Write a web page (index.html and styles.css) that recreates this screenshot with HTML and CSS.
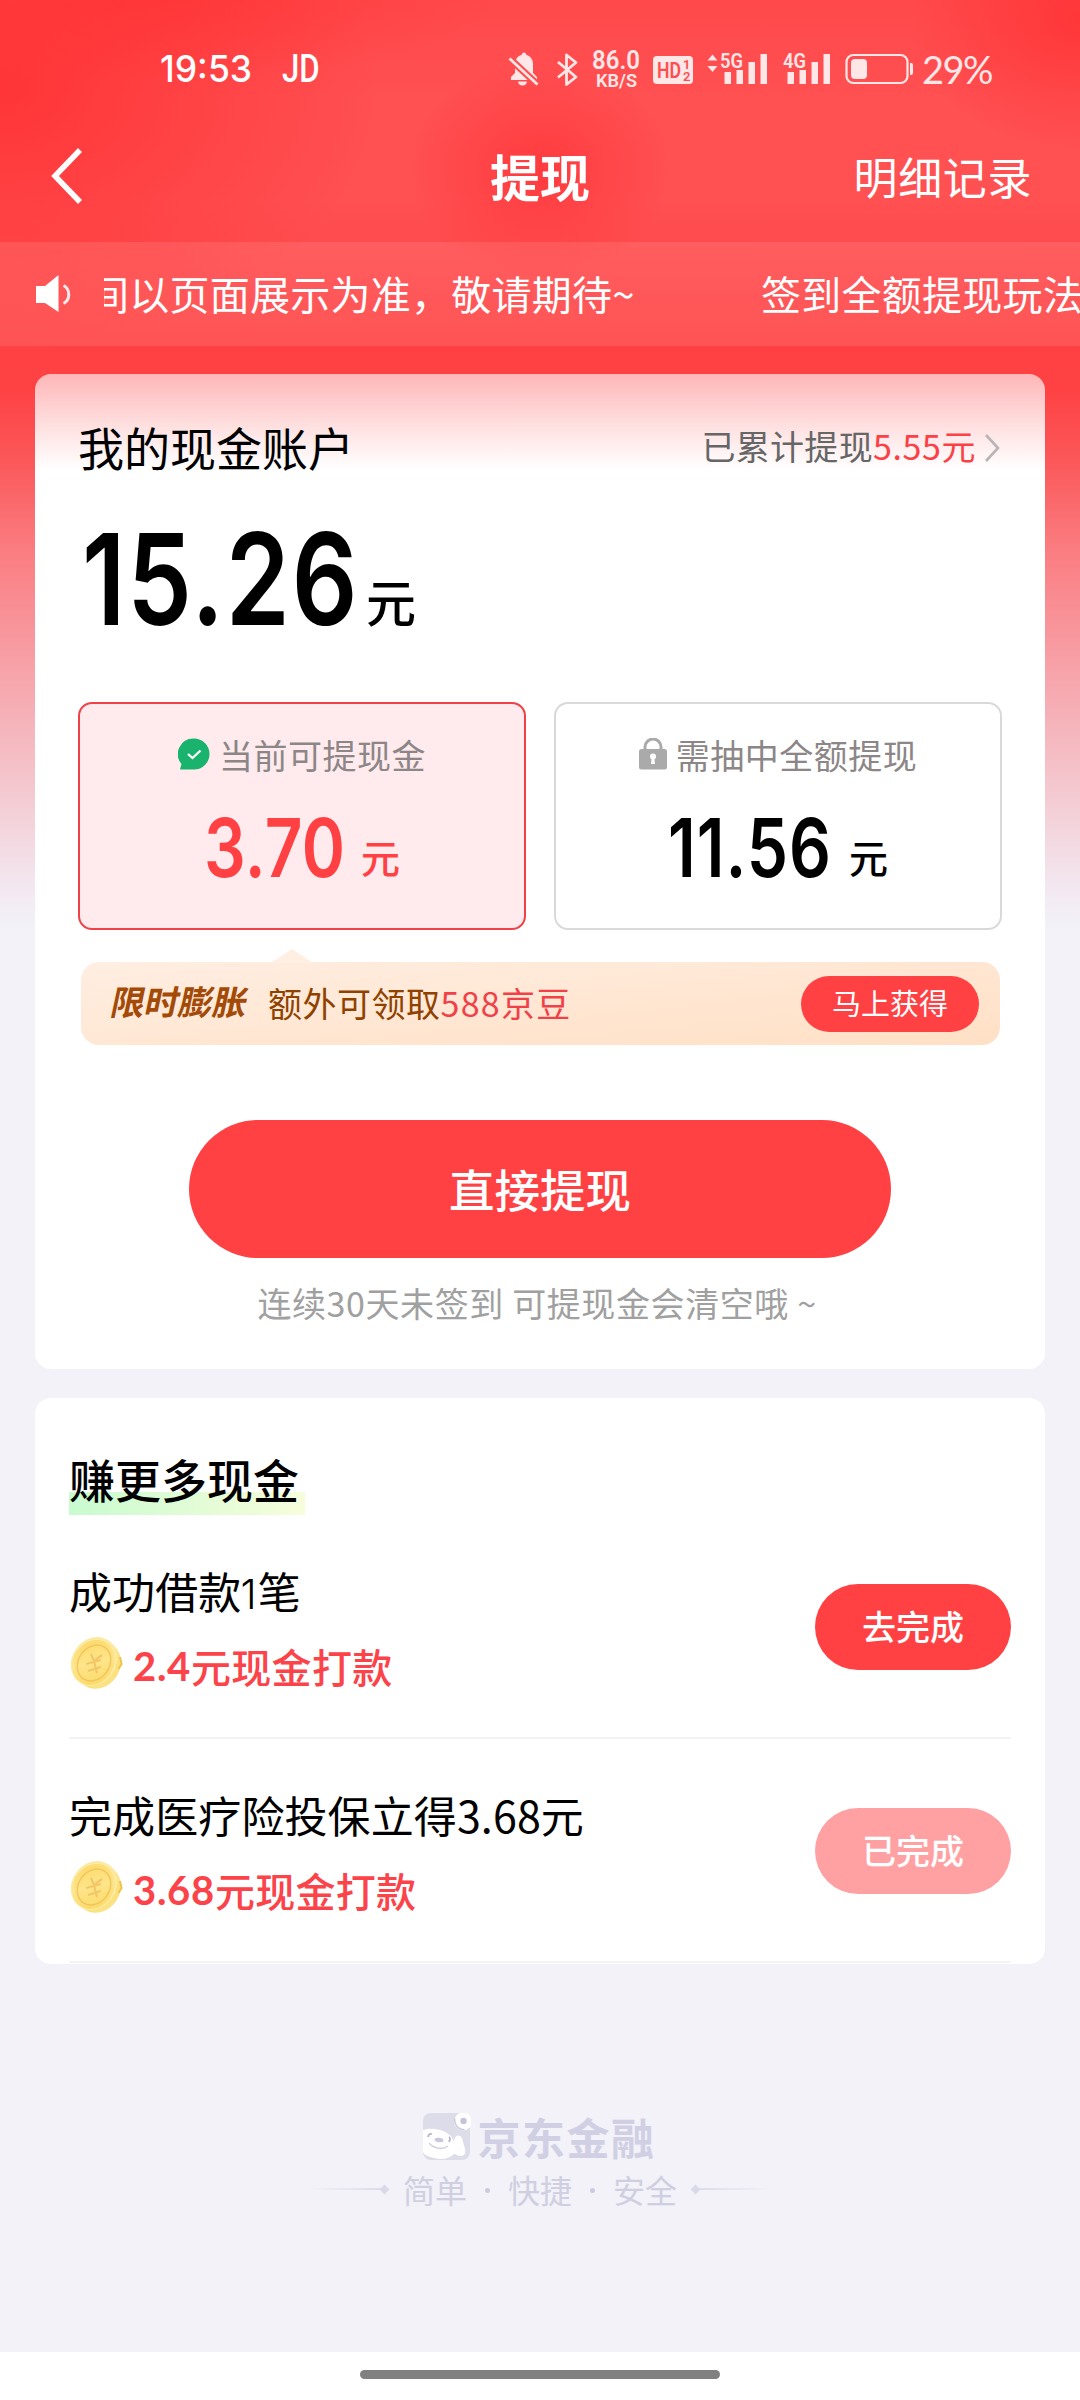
FILE: index.html
```html
<!DOCTYPE html>
<html lang="zh-CN">
<head>
<meta charset="utf-8">
<title>提现</title>
<link rel="stylesheet" href="styles.css">
</head>
<body>
<div class="page">
  <div class="status">
    <span class="clock">19:53</span><span class="carrier">JD</span>
    <svg class="indicators" width="410" height="44" viewBox="500 48 410 44" fill="#ffe6e7">
      <path d="M511 80v-3l4-4v-9c0-5 3-8 7-9.500a2 2 0 0 1 4 0c4 1.500 7 4.500 7 9.500v9l4 4v3z"/>
      <path d="M518 81.500h9a4.500 4 0 0 1-9 0z"/>
      <path d="M508 57l30 28" stroke="#ff4e50" stroke-width="7"/>
      <path d="M509.500 58.500l28 26" stroke="#ffe6e7" stroke-width="2.800"/>
      <path d="M558 62l18 15-9.500 7.500v-29.500l9.500 7.500-18 15" fill="none" stroke="#ffe6e7" stroke-width="2.800" stroke-linejoin="round"/>
      <text class="ind-b" x="592" y="69" textLength="48" lengthAdjust="spacingAndGlyphs" font-size="25">86.0</text>
      <text class="ind-b" x="596" y="87" textLength="41" lengthAdjust="spacingAndGlyphs" font-size="19">KB/S</text>
      <rect x="653" y="56" width="40" height="28" rx="4"/>
      <text class="ind-b" x="657" y="78" textLength="24" lengthAdjust="spacingAndGlyphs" font-size="22" fill="#ff4e50">HD</text>
      <text class="ind-b" x="683" y="69" font-size="13" fill="#ff4e50">1</text>
      <text class="ind-b" x="683" y="81" font-size="13" fill="#ff4e50">2</text>
      <path d="M707.500 60.500l5-6 5 6zM707.500 66l5 6 5-6z"/>
      <text class="ind-b" x="720" y="68" textLength="23" lengthAdjust="spacingAndGlyphs" font-size="21">5G</text>
      <path d="M724.500 72h6.500v12h-6.500zM736.500 70h6.500v14h-6.500zM748.500 62h6.500v22h-6.500zM760.500 54h6.500v30h-6.500z"/>
      <text class="ind-b" x="783" y="68" textLength="23" lengthAdjust="spacingAndGlyphs" font-size="21">4G</text>
      <path d="M787.500 72h6.500v12h-6.500zM799.500 70h6.500v14h-6.500zM811.500 62h6.500v22h-6.500zM823.500 54h6.500v30h-6.500z"/>
      <rect x="846.500" y="55" width="61" height="28" rx="7" fill="none" stroke="#ffe6e7" stroke-width="2.200"/>
      <rect x="851" y="59" width="16" height="20" rx="4"/>
    </svg>
    <i class="tip"></i><span class="battery">29%</span>
  </div>
  <div class="nav">
    <svg class="back" width="34" height="58" viewBox="0 0 34 58"><path d="M30 3L5 29l25 26" fill="none" stroke="#fff" stroke-width="5.500"/></svg>
    <h1>提现</h1>
    <span class="records">明细记录</span>
  </div>
  <div class="notice">
    <svg class="horn" width="38" height="38" viewBox="0 0 38 38" fill="#fff"><path d="M1 11h9L23.500 0v37L10 28H1z"/><path d="M28.500 10.500c7 3.500 7 14.500 0 18" fill="none" stroke="#ffe9ea" stroke-width="3"/></svg>
    <div class="marquee"><span class="first">间以页面展示为准，敬请期待~</span><span class="second">签到全额提现玩法</span></div>
  </div>

  <section class="card account">
    <div class="account-head">
      <h2>我的现金账户</h2>
      <span class="total">已累计提现<b>5.55元</b></span>
      <svg class="more" width="18" height="30" viewBox="0 0 18 30"><path d="M2 2l12 13L2 28" fill="none" stroke="#b9b4b5" stroke-width="2.600"/></svg>
    </div>
    <div class="balance"><span class="digits">15.26</span><span class="yuan">元</span></div>
    <div class="options">
      <div class="option active">
        <div class="option-name">
          <svg width="32" height="32" viewBox="0 0 32 32"><path d="M16 .5a15.500 15.500 0 0 1 0 31H3c-1 0-1-.5-.7-1.200L3.500 26A15.500 15.500 0 0 1 16 .5z" fill="#19b36d"/><path d="M10 16l4.500 4L22.500 12.500" fill="none" stroke="#fff" stroke-width="2.300"/></svg>
          <span>当前可提现金</span>
        </div>
        <div class="option-sum"><span class="digits d1">3.70</span><span class="yuan">元</span></div>
      </div>
      <div class="option">
        <div class="option-name">
          <svg width="28" height="32" viewBox="0 0 28 32"><path d="M6 13V9a8 8 0 0 1 16 0v4" fill="none" stroke="#aaa" stroke-width="3"/><rect y="11" width="28" height="20.500" rx="2.500" fill="#aaa"/><circle cx="14" cy="18.500" r="3" fill="#fff"/><path d="M12.800 19h2.400l.8 7h-4z" fill="#fff"/></svg>
          <span>需抽中全额提现</span>
        </div>
        <div class="option-sum"><span class="digits d2">11.56</span><span class="yuan">元</span></div>
      </div>
    </div>
    <div class="promo">
      <span class="promo-tag">限时膨胀</span>
      <span class="promo-text">额外可领取<b>588京豆</b></span>
      <span class="promo-btn">马上获得</span>
    </div>
    <div class="withdraw">直接提现</div>
    <p class="hint">连续30天未签到 可提现金会清空哦 ~</p>
  </section>

  <section class="card tasks">
    <h2><span>赚更多现金</span></h2>
    <div class="task">
      <div class="task-info">
        <div class="task-name">成功借款<span class="one">1</span>笔</div>
        <div class="reward">
          <svg width="54" height="54" viewBox="0 0 54 54"><use href="#coin"/></svg>
          <span class="sum"><span class="num">2.4</span>元现金打款</span>
        </div>
      </div>
      <span class="task-btn">去完成</span>
    </div>
    <div class="task">
      <div class="task-info">
        <div class="task-name">完成医疗险投保立得3.68元</div>
        <div class="reward">
          <svg width="54" height="54" viewBox="0 0 54 54"><use href="#coin"/></svg>
          <span class="sum"><span class="num">3.68</span>元现金打款</span>
        </div>
      </div>
      <span class="task-btn done">已完成</span>
    </div>
  </section>

  <footer>
    <div class="brand">
      <svg width="48" height="48" viewBox="0 0 48 48">
        <rect x="0" y="0" width="47" height="47" rx="8" fill="#dddce9"/>
        <path d="M0 17c8-3 21-1 28 6 2 3 2 5 3 5 1-6 5-7 8-3l3 11c1 5-1 7-4 7-4 0-5-2-7-2-5 5-12 6-20 4C3 43 0 41 0 38z" fill="#fff"/>
        <ellipse cx="16" cy="27" rx="4.500" ry="2.200" fill="#c9c7dc" transform="rotate(8 16 27)"/>
        <path d="M6 30c5 6 14 7 19 3" fill="none" stroke="#d3d2e2" stroke-width="1.600"/>
        <path d="M5 24q1-4 4-3M26 24q2 1 0 5" fill="none" stroke="#b7b5ce" stroke-width="1.800"/>
        <circle cx="40" cy="8.500" r="9" fill="#fff"/><path d="M31.500 5q0 11 10 12" fill="none" stroke="#cfcde0" stroke-width="1.500"/><circle cx="40.500" cy="8" r="3.200" fill="#c6c4da"/>
      </svg>
      <span>京东金融</span>
    </div>
    <div class="slogan"><i class="line left"></i><i class="dot"></i><span>简单</span><em></em><span>快捷</span><em></em><span>安全</span><i class="dot"></i><i class="line right"></i></div>
  </footer>
  <div class="gesture"><i></i></div>
</div>
<svg class="defs" width="0" height="0">
  <defs>
    <linearGradient id="face" x1="0" y1="0" x2="1" y2="1"><stop offset="0" stop-color="#fdd663"/><stop offset=".5" stop-color="#fee58a"/><stop offset="1" stop-color="#fbd65c"/></linearGradient>
    <linearGradient id="rim" x1="0" y1="0" x2="1" y2="1"><stop offset="0" stop-color="#fdedb0"/><stop offset=".6" stop-color="#fbe07a"/><stop offset="1" stop-color="#fbe48a"/></linearGradient>
    <g id="coin">
      <ellipse cx="29" cy="28.500" rx="22" ry="25" transform="rotate(30 29 28.500)" fill="url(#rim)"/>
      <path d="M51 21l1.500 7-3 5" fill="none" stroke="#f0c34c" stroke-width="2"/>
      <ellipse cx="25" cy="25.500" rx="22" ry="25.500" transform="rotate(35 25 25.500)" fill="#fdeaa2"/>
      <ellipse cx="24.500" cy="26.500" rx="20" ry="23.500" transform="rotate(35 24.500 26.500)" fill="url(#face)"/>
      <ellipse cx="25" cy="27" rx="15.500" ry="19" transform="rotate(35 25 27)" fill="none" stroke="#f1c65a" stroke-width="1.500"/>
      <path d="M22 18l3 7 8-6M17 28l15-4M19 35l13-4M25 25l3 12" stroke="#f2c768" stroke-width="2.200" fill="none"/>
    </g>
  </defs>
</svg>
</body>
</html>
```
FILE: styles.css
```css
* { box-sizing: border-box; }
body { margin: 0; font-family: "Noto Sans CJK SC", "Noto Sans", sans-serif; color: #000; }
h1, h2, p { margin: 0; font-weight: 400; }
b, i, em { font-weight: inherit; font-style: normal; }
svg { display: block; flex: none; }
.defs { position: absolute; }

.page {
  width: 1080px; height: 2400px; overflow: hidden;
  display: flex; flex-direction: column;
  white-space: nowrap;
  background:
    radial-gradient(ellipse 130px 110px at 540px 170px, rgba(255,52,56,.75), rgba(255,52,56,0)),
    radial-gradient(ellipse 380px 260px at 0 90px, rgba(255,46,48,.8), rgba(255,46,48,0)),
    radial-gradient(ellipse 170px 130px at 1080px 20px, rgba(255,46,48,.7), rgba(255,46,48,0)),
    radial-gradient(ellipse 340px 80px at 160px 0, rgba(255,46,48,.5), rgba(255,46,48,0)),
    linear-gradient(#ff494b 0, #ff5052 100px, #ff5052 200px, #ff4042 345px, #fe4244 390px, #fb5759 460px, #fa7b7f 545px, #f6acb3 700px, #f3e2ea 870px, #f3ebf5 900px, #f2f2f8 930px);
}

/* system status bar */
.status { height: 138px; display: flex; align-items: center; color: #fff; font-family: Lato, sans-serif; padding-left: 160px; }
.clock { font-family: Inter, sans-serif; font-size: 37px; width: 122px; line-height: 44px; font-weight: 500; transform: scaleX(.96); transform-origin: 0 50%; }
.carrier { font-family: Roboto, sans-serif; font-size: 38px; width: 218px; line-height: 44px; font-weight: 500; transform: scaleX(.82); transform-origin: 0 50%; }
.indicators { margin-top: 2px; }
.ind-b { font-family: Roboto, sans-serif; font-weight: 600; }
.tip { width: 3px; height: 12px; border-radius: 0 2px 2px 0; background: #ffe6e7; }
.battery { margin-left: 9px; font-size: 38px; line-height: 44px; color: #ffe6e7; letter-spacing: -1.500px; }

.nav { height: 104px; display: grid; grid-template-columns: 1fr auto 1fr; align-items: center; padding: 0 48px 28px; color: #fff; line-height: 70px; }
.nav h1 { font-size: 50px; font-weight: 700; margin-top: -2px; }
.back { margin-left: 2px; }
.records { justify-self: end; font-size: 44px; letter-spacing: .6px; }

.notice { height: 104px; background: rgba(255,255,255,.1); display: flex; align-items: center; padding-left: 35px; color: #fff; font-size: 40px; }
.horn { margin-right: 31px; }
.marquee { flex: 1; overflow: hidden; display: flex; line-height: 60px; letter-spacing: .25px; padding-bottom: 2px; }
.first { margin-left: -15px; width: 672px; flex: none; }

.card { margin: 0 35px; background: #fff; border-radius: 16px; }
.account { margin-top: 28px; height: 995px; padding: 0 43px; background: linear-gradient(rgba(255,255,255,.62), #fff 96px); }
.account-head { height: 144px; display: flex; align-items: center; line-height: 60px; }
.account-head h2 { font-size: 46px; flex: 1; }
.total { font-size: 34px; color: #666; letter-spacing: .3px; }
.total b { color: #fb4146; letter-spacing: .6px; }
.more { margin: 3px 0 0 8px; }

.digits { font-family: Inter, sans-serif; font-weight: 600; display: inline-block; transform-origin: 0 100%; }
.balance { height: 184px; display: flex; line-height: 130px; }
.balance .digits { font-size: 127px; width: 284px; letter-spacing: 2.200px; transform: scaleX(.81); margin: -4px 0 0 4px; }
.balance .yuan { font-size: 50px; font-weight: 500; padding-top: 17px; }

.options { display: grid; grid-template-columns: 448px 448px; gap: 28px; }
.option { height: 228px; border: 2px solid #d9d9d9; border-radius: 14px; padding-top: 22px; }
.option.active { border-color: #f04149; background: #ffebed; color: #ff4144; }
.option-name { display: flex; justify-content: center; align-items: center; gap: 9px; height: 56px; font-size: 34px; letter-spacing: .5px; color: #8c8687; }
.option-sum { display: flex; justify-content: center; align-items: baseline; line-height: 80px; margin-top: 22px; }
.option-sum .digits { font-size: 81px; transform: translateY(4px) scaleX(.81); }
.option-sum .d1 { width: 157px; letter-spacing: .5px; }
.option-sum .d2 { width: 181px; letter-spacing: 1.200px; }
.option-sum .yuan { font-size: 39px; font-weight: 500; }

.promo { position: relative; height: 83px; margin: 32px 2px 0 3px; border-radius: 18px; background: linear-gradient(174deg, #ffeee2, #ffe0c5); display: flex; align-items: center; padding: 0 21px 0 31px; }
.promo::before { content: ""; position: absolute; left: 190px; top: -13px; width: 42px; height: 14px; background: #ffeee2; clip-path: polygon(50% 0, 100% 100%, 0 100%); }
.promo-tag { font-size: 34px; font-weight: 700; color: #a34a08; transform: skewX(-12deg); width: 156px; margin-top: -6px; }
.promo-text { font-size: 34px; color: #8f4200; letter-spacing: .5px; flex: 1; margin-top: -2px; }
.promo-text b { color: #f04149; letter-spacing: 1.300px; }
.promo-btn { width: 178px; height: 56px; border-radius: 28px; background: #ff4144; color: #fff; font-size: 29px; line-height: 52px; text-align: center; }

.withdraw { width: 702px; height: 138px; margin: 75px 0 0 111px; border-radius: 69px; background: #ff4144; color: #fff; font-size: 45.500px; font-weight: 500; text-align: center; line-height: 136px; }
.hint { text-align: center; font-size: 34px; letter-spacing: .6px; line-height: 50px; margin: 20px 6px 0 0; color: #a0a0a0; }

.tasks { margin-top: 29px; height: 566px; padding: 0 34px; }
.tasks h2 { padding-top: 50px; height: 117px; font-size: 46px; line-height: 60px; font-weight: 500; }
.tasks h2 span { display: inline-block; height: 67px; padding-right: 6px; background: linear-gradient(90deg, #c9fbd0, #f7fddb) 0 100% / 100% 23px no-repeat; }
.task { height: 224px; border-bottom: 2px solid #f3f3f5; display: flex; align-items: center; justify-content: space-between; }
.task-name { font-size: 43px; line-height: 60px; letter-spacing: .1px; }
.one { font-family: Inter, sans-serif; font-size: 41px; line-height: 40px; font-weight: 300; margin: 0 1px 0 -1px; }
.reward { display: flex; align-items: center; gap: 10px; height: 54px; margin-top: 19px; }
.reward svg { margin-top: -5px; }
.sum { font-size: 40px; line-height: 54px; font-weight: 500; color: #fb4349; display: flex; letter-spacing: .3px; }
.num { font-family: Lato, sans-serif; font-weight: 700; letter-spacing: .7px; }
.task-btn { width: 196px; height: 86px; border-radius: 43px; background: #ff4144; color: #fff; font-size: 34px; font-weight: 500; line-height: 84px; text-align: center; margin-top: 2px; }
.task-btn.done { background: #ffa1a3; }

footer { margin-top: 146px; height: 242px; display: flex; flex-direction: column; align-items: center; }
.brand { display: flex; align-items: center; gap: 7px; height: 52px; font-size: 43px; letter-spacing: 1.500px; line-height: 52px; font-weight: 700; color: #d0cfe4; margin-right: 2px; }
.brand svg { margin-top: 2px; }
.slogan { display: flex; align-items: center; margin-top: 5px; height: 44px; line-height: 44px; font-size: 32px; color: #d0cfe2; }
.slogan em { width: 5px; height: 5px; border-radius: 3px; background: #cccae0; margin: 2px 18px 0; }
.dot { width: 7px; height: 7px; transform: rotate(45deg); background: #dad9ea; }
.line { width: 72px; height: 2px; }
.left { background: linear-gradient(90deg, transparent, #dcdbea); }
.right { background: linear-gradient(270deg, transparent, #dcdbea); }
.slogan .left + .dot { margin-right: 15px; }
.slogan span + .dot { margin-left: 15px; }

.gesture { height: 48px; background: #fff; padding-top: 18px; }
.gesture i { display: block; width: 360px; height: 9px; border-radius: 5px; background: #808080; margin: 0 auto; }
```
